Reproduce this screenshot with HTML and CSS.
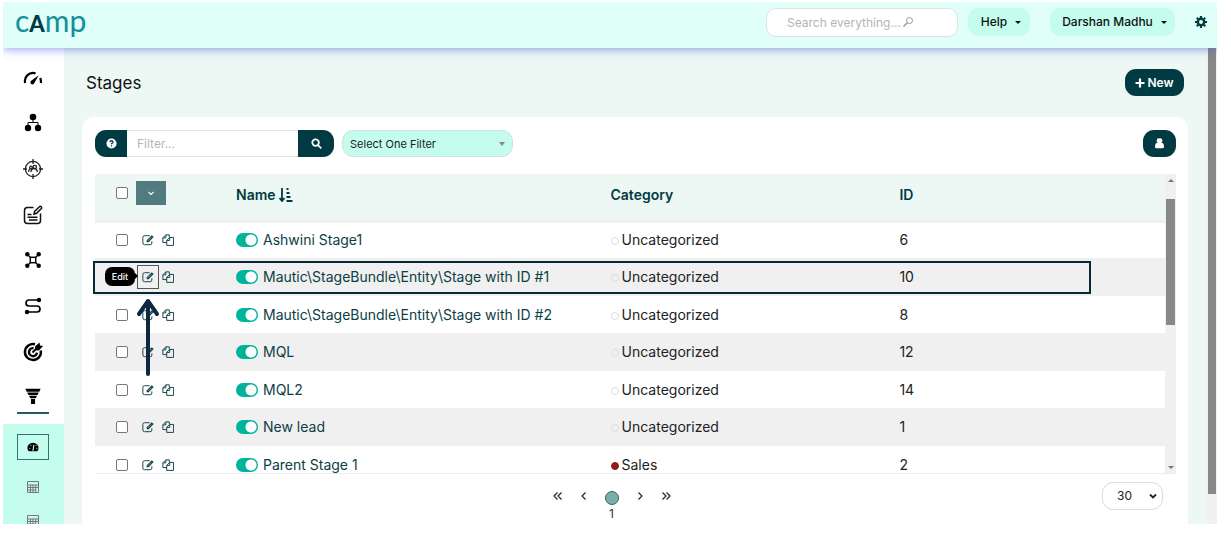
FILE: index.html
```html
<!DOCTYPE html>
<html lang="en">
<head>
<meta charset="utf-8">
<title>Stages</title>
<link rel="stylesheet" href="styles.css">
</head>
<body>
<svg class="defs" aria-hidden="true">
  <symbol id="edit" viewBox="0 0 14 14"><path d="M9 2H3Q1 2 1 4v6.500q0 2 2 2h6.500q2 0 2-2V8.500" fill="none" stroke="currentColor" stroke-width="1.100"/><path d="M5.500 9.500V7.300l5.900-5.900 2.200 2.200-5.900 5.900z" fill="currentColor"/><path d="M6.800 8l4-4" stroke="#fff" stroke-width=".6"/></symbol>
  <symbol id="copy" viewBox="0 0 14 14"><g fill="none" stroke="currentColor" stroke-width="1.100" stroke-linejoin="round"><path d="M5.500 10H1V4.500l3.500-3.500H8.500V4M4.500 1v3.500H1"/><path d="M5.500 7.500l3.500-3.500h4.500V13.300h-8zM9 4v3.500H5.500"/></g></symbol>
  <symbol id="calc" viewBox="0 0 12 12"><path d="M.5.500h11v11H.5zM.5 4h11M3.500 4v7.500M6 4v7.500M8.700 4v7.500M.5 6.500h11M.5 9h8.200" fill="none" stroke="#777" /></symbol>
</svg>
<div class="app">
  <header class="topbar">
    <a class="logo" href="#">c<b>A</b>mp</a>
    <label class="search"><input type="search" aria-label="Search everything" placeholder="Search everything..."><svg viewBox="0 0 12 12"><g fill="none" stroke="#999"><circle cx="7.500" cy="4.500" r="3"/><path d="M5.300 6.700L1.500 10.500" stroke-width="1.500"/></g></svg></label>
    <button class="pill help">Help <i class="caret"></i></button>
    <button class="pill user">Darshan Madhu <i class="caret"></i></button>
    <button class="gear" aria-label="Settings"><svg viewBox="0 0 12 12"><circle cx="6" cy="6" r="3.200" fill="none" stroke="#003b43" stroke-width="2.400"/><path d="M6 0v2M6 10v2M0 6h2M10 6h2M1.800 1.800l1.400 1.400M8.800 8.800l1.400 1.400M1.800 10.200l1.400-1.400M8.800 3.200l1.400-1.400" stroke="#003b43" stroke-width="2.200"/></svg></button>
  </header>
  <div class="body">
    <aside class="sidebar">
      <nav class="nav" aria-label="Main">
        <a href="#" aria-label="Dashboard"><svg viewBox="0 0 20 20"><path d="M2.200 15a8 8 0 0 1 10.300-9.600M17.200 10a8 8 0 0 1 .6 5" fill="none" stroke="#000" stroke-width="2.200"/><path d="M15.800 7.200l-4.600 8a2 2 0 1 1-2.700-2.600z"/></svg></a>
        <a href="#" aria-label="Segments"><svg viewBox="0 0 20 20"><circle cx="10" cy="4" r="3.300"/><circle cx="5" cy="15" r="3.200"/><circle cx="15" cy="15" r="3.200"/><path d="M10 6v3.500M5 13V9.500h10V13" fill="none" stroke="#000"/></svg></a>
        <a href="#" aria-label="Contacts"><svg viewBox="0 0 20 20"><g fill="none" stroke="#222" stroke-width="1.300"><circle cx="10" cy="10" r="7.600"/><path d="M10 0v5M10 15v5M0 10h4M16 10h4M5.500 13q.3-3 2-3.500M8 13q.2-3.500 3-3.500t3.500 3.500"/><circle cx="8" cy="8.500" r="1.300"/><circle cx="11.800" cy="8" r="1.700"/></g></svg></a>
        <a href="#" aria-label="Forms"><svg viewBox="0 0 20 20"><g fill="none" stroke="#111" stroke-width="1.500"><path d="M10.500 2.500h-6q-3 0-3 3v10q0 3 3 3h10q3 0 3-3v-7"/><path d="M11 9.200l.6-2.700 4.800-4.800q1-.8 1.800 0t.2 1.800l-4.800 4.800z"/><path d="M4.500 9.500h4M4.500 12.300h10M6 15h8.500"/></g></svg></a>
        <a href="#" aria-label="Channels"><svg viewBox="0 0 20 20"><path d="M4 4l12 12M16 4L4 16" stroke="#000" stroke-width="1.300"/><rect x="7.300" y="7.300" width="5.400" height="5.400" fill="#fff" stroke="#000" stroke-width="1.400"/><circle cx="4.300" cy="4.300" r="2.200"/><circle cx="15.700" cy="4.300" r="2.200"/><circle cx="4.300" cy="15.700" r="2.200"/><circle cx="15.700" cy="15.700" r="2.200"/></svg></a>
        <a href="#" aria-label="Campaigns"><svg viewBox="0 0 20 20"><path d="M16 4H6a3 3 0 0 0 0 6h8a3 3 0 0 1 0 6H4" fill="none" stroke="#000" stroke-width="1.700"/><circle cx="16" cy="4" r="2.200"/><circle cx="4" cy="16" r="2.200"/></svg></a>
        <a href="#" aria-label="Goals"><svg viewBox="0 0 20 20"><g fill="none" stroke="#000"><path d="M12 2.300A8 8 0 1 0 17.800 8.500" stroke-width="2.500"/><path d="M10.500 6.200a4 4 0 1 0 3.500 4.500" stroke-width="2.400"/><path d="M9.500 10.500l6-6" stroke-width="2"/></g><path d="M12 4.500l4.500-4 .5 3 3 .5-4 4.500-4-.2z"/></svg></a>
        <a href="#" class="current" aria-label="Stages"><svg viewBox="0 0 20 20"><path d="M1.500 2h17l-1.500 3.300H3zM3.500 6h13l-1.500 2.800H5zM5.500 9.600h9l-1.600 2.800H7.100zM7.700 13.200h4.600V19H7.700z"/></svg></a>
      </nav>
      <nav class="subnav" aria-label="Stages">
        <a href="#" class="active" aria-label="Overview"><svg viewBox="0 0 14 12"><path d="M2 11Q.5 9.500.5 7a6.500 6 0 0 1 13 0q0 2.500-1.500 4z"/><path d="M7 10l1-6M3.200 7.500h.1M4.500 4h.1M10.500 4h.1M11.500 7.500h.1" stroke="#c4fced" stroke-width="1.300" stroke-linecap="round"/></svg></a>
        <a href="#" aria-label="Calculator"><svg><use href="#calc"/></svg></a>
        <a href="#" aria-label="Calculator reports"><svg><use href="#calc"/></svg></a>
      </nav>
    </aside>
    <main class="content">
      <div class="title"><h1>Stages</h1><button class="dark new"><svg viewBox="0 0 10 10"><path d="M5 .5v9M.5 5h9" stroke="#fff" stroke-width="2.200"/></svg>New</button></div>
      <section class="card">
        <div class="tools">
          <div class="filter">
            <button class="dark" aria-label="Filter help"><svg viewBox="0 0 12 12"><circle cx="6" cy="6" r="5.500" fill="#fff"/><path d="M4.200 4.500q.2-1.500 1.800-1.500t1.700 1.400q0 .8-.9 1.200t-.8 1.300" fill="none" stroke="#003b43" stroke-width="1.400"/><path d="M5.300 8h1.400v1.300H5.300z" fill="#003b43"/></svg></button>
            <input type="text" aria-label="Filter" placeholder="Filter...">
            <button class="dark" aria-label="Search"><svg viewBox="0 0 12 12"><g fill="none" stroke="#fff" stroke-width="1.900"><circle cx="5" cy="5" r="3.600"/><path d="M7.700 7.700l3.500 3.500"/></g></svg></button>
          </div>
          <div class="choose"><select aria-label="Saved filter"><option>Select One Filter</option></select><i class="caret"></i></div>
          <button class="dark owner" aria-label="My stages"><svg viewBox="0 0 12 12"><path d="M6 .5a2.500 2.500 0 0 1 2 4.500q2.800.8 2.800 3v2q0 1.200-1.300 1.200h-7Q1.200 11.200 1.200 10V8Q1.200 5.800 4 5a2.500 2.500 0 0 1 2-4.500z" fill="#fff"/></svg></button>
        </div>
        <div class="frame">
          <div class="scroll">
            <table>
              <colgroup><col class="c-act"><col class="c-name"><col class="c-cat"><col></colgroup>
              <thead><tr><th><div class="act"><input type="checkbox" aria-label="Select all"><button class="bulk" aria-label="Bulk actions"><svg viewBox="0 0 8 8"><path d="M1.500 3L4 5.500 6.500 3" fill="none" stroke="#fff" stroke-width="1.100"/></svg></button></div></th><th>Name <svg class="sort" viewBox="0 0 14 14"><path d="M3 0v13M.5 10L3 13l2.500-3M7.500 1h2M7.500 5h3M7.500 9h4M7.500 13h6" fill="none" stroke="#003b43" stroke-width="1.800"/></svg></th><th>Category</th><th>ID</th></tr></thead>
              <tbody>
                <tr><td><div class="act"><input type="checkbox" aria-label="Select Ashwini Stage1"><a href="#" aria-label="Edit"><svg><use href="#edit"/></svg></a><a href="#" aria-label="Clone"><svg><use href="#copy"/></svg></a></div></td><td><label class="name"><input type="checkbox" checked><a href="#">Ashwini Stage1</a></label></td><td><i class="dot"></i>Uncategorized</td><td>6</td></tr>
                <tr><td><div class="act"><input type="checkbox" aria-label="Select stage 10"><a href="#" class="focus" aria-label="Edit"><svg><use href="#edit"/></svg></a><a href="#" aria-label="Clone"><svg><use href="#copy"/></svg></a></div></td><td><label class="name"><input type="checkbox" checked><a href="#">Mautic\StageBundle\Entity\Stage with ID #1</a></label></td><td><i class="dot"></i>Uncategorized</td><td>10</td></tr>
                <tr><td><div class="act"><input type="checkbox" aria-label="Select stage 8"><a href="#" aria-label="Edit"><svg><use href="#edit"/></svg></a><a href="#" aria-label="Clone"><svg><use href="#copy"/></svg></a></div></td><td><label class="name"><input type="checkbox" checked><a href="#">Mautic\StageBundle\Entity\Stage with ID #2</a></label></td><td><i class="dot"></i>Uncategorized</td><td>8</td></tr>
                <tr><td><div class="act"><input type="checkbox" aria-label="Select MQL"><a href="#" aria-label="Edit"><svg><use href="#edit"/></svg></a><a href="#" aria-label="Clone"><svg><use href="#copy"/></svg></a></div></td><td><label class="name"><input type="checkbox" checked><a href="#">MQL</a></label></td><td><i class="dot"></i>Uncategorized</td><td>12</td></tr>
                <tr><td><div class="act"><input type="checkbox" aria-label="Select MQL2"><a href="#" aria-label="Edit"><svg><use href="#edit"/></svg></a><a href="#" aria-label="Clone"><svg><use href="#copy"/></svg></a></div></td><td><label class="name"><input type="checkbox" checked><a href="#">MQL2</a></label></td><td><i class="dot"></i>Uncategorized</td><td>14</td></tr>
                <tr><td><div class="act"><input type="checkbox" aria-label="Select New lead"><a href="#" aria-label="Edit"><svg><use href="#edit"/></svg></a><a href="#" aria-label="Clone"><svg><use href="#copy"/></svg></a></div></td><td><label class="name"><input type="checkbox" checked><a href="#">New lead</a></label></td><td><i class="dot"></i>Uncategorized</td><td>1</td></tr>
                <tr><td><div class="act"><input type="checkbox" aria-label="Select Parent Stage 1"><a href="#" aria-label="Edit"><svg><use href="#edit"/></svg></a><a href="#" aria-label="Clone"><svg><use href="#copy"/></svg></a></div></td><td><label class="name"><input type="checkbox" checked><a href="#">Parent Stage 1</a></label></td><td><i class="dot sales"></i>Sales</td><td>2</td></tr>
              </tbody>
            </table>
            <div class="track"><i class="up"></i><div class="thumb"></div><i class="down"></i></div>
          </div>
          <div class="highlight"><span class="tip">Edit</span></div>
          <svg class="arrow" viewBox="0 0 24 80"><path d="M12 77V5M3 17L12 4l9 13" fill="none" stroke="#0f2740" stroke-width="4" stroke-linecap="round" stroke-linejoin="round"/></svg>
        </div>
        <footer class="pager">
          <nav class="pages" aria-label="Pages">
            <a href="#" aria-label="First"><svg viewBox="0 0 10 10"><path d="M4.500 1.500L1 5l3.500 3.500M8.500 1.500L5 5l3.500 3.500"/></svg></a>
            <a href="#" aria-label="Previous"><svg viewBox="0 0 10 10"><path d="M6.500 1.500L3 5l3.500 3.500"/></svg></a>
            <a href="#" class="page"><i></i>1</a>
            <a href="#" aria-label="Next"><svg viewBox="0 0 10 10"><path d="M3.500 1.500L7 5 3.500 8.500"/></svg></a>
            <a href="#" aria-label="Last"><svg viewBox="0 0 10 10"><path d="M1.500 1.500L5 5 1.500 8.500M5.500 1.500L9 5 5.500 8.500"/></svg></a>
          </nav>
          <div class="size"><select aria-label="Rows per page"><option>30</option></select><svg viewBox="0 0 8 8"><path d="M1 2.500l3 3 3-3" fill="none" stroke="#222" stroke-width="1.800"/></svg></div>
        </footer>
      </section>
    </main>
    <div class="pagebar"><div></div></div>
  </div>
</div>
</body>
</html>
```
FILE: styles.css
```css
* { box-sizing: border-box; }
body {
  margin: 0;
  padding: 2px 14px 17px 3px;
  height: 100vh;
  background: #fff;
  color: #222;
  font: 14px/20px Inter, "Liberation Sans", sans-serif;
}
button, input, select { font: inherit; color: inherit; margin: 0; }
button { border: 0; padding: 0; display: flex; align-items: center; justify-content: center; }
a { color: #0c3e45; text-decoration: none; }
svg { display: block; width: 14px; height: 14px; flex: none; }
.defs { position: absolute; width: 0; height: 0; }
.app { height: 100%; display: flex; flex-direction: column; overflow: hidden; }

/* Top bar */
.topbar {
  position: relative;
  z-index: 1;
  flex: none;
  height: 46px;
  padding: 0 10px 6px 12px;
  display: flex;
  align-items: center;
  background: #e0fff8;
  box-shadow: 0 2px 8px rgba(70, 90, 220, .5);
}
.logo { margin-right: auto; font: 30px/32px Lato, sans-serif; color: #128f9b; }
.logo b { font-size: 22px; font-weight: 900; color: #003b43; }
.search { display: grid; align-items: center; width: 192px; margin-right: 10px; }
.search input {
  grid-area: 1 / 1;
  width: 100%;
  height: 29px;
  padding: 0 20px;
  border: 1px solid #d9e5e2;
  border-radius: 10px;
  background: #fff;
  font-size: 12px;
}
.search svg { grid-area: 1 / 1; width: 12px; height: 12px; margin-left: 136px; }
::placeholder { color: #b5b5b5; opacity: 1; }
.pill {
  height: 28px;
  gap: 8px;
  border-radius: 10px;
  background: #c4fced;
  color: #111;
  font-size: 12px;
  font-weight: 500;
}
.help { width: 62px; padding-left: 4px; margin-right: 20px; }
.user { width: 125px; padding-left: 4px; margin-right: 20px; }
.caret { width: 0; height: 0; border: 3px solid transparent; border-top-color: #111; border-bottom: 0; }
.gear { background: none; }
.gear svg { width: 12px; height: 12px; }

.body { flex: 1; min-height: 0; display: flex; }

/* Sidebar */
.sidebar { width: 61px; flex: none; display: flex; flex-direction: column; padding-top: 7px; }
.nav { flex: none; display: grid; grid-auto-rows: 1fr; height: 365px; margin-bottom: 4px; padding-right: 1px; }
.nav a { display: flex; align-items: center; justify-content: center; }
.nav svg { width: 20px; height: 20px; }
.nav .current { width: 32px; margin: 0 auto 6px; padding-top: 6px; border-bottom: 2px solid #245b62; }
.nav .current svg { width: 18px; height: 18px; }
.subnav {
  flex: 1;
  min-height: 0;
  overflow: hidden;
  padding: 10px 1px 0 0;
  background: #c4fced;
  display: flex;
  flex-direction: column;
  align-items: center;
  gap: 8px;
}
.subnav a { flex: none; width: 32px; height: 26px; display: flex; align-items: center; justify-content: center; }
.subnav svg { width: 12px; height: 12px; }
.subnav .active { border: 1px solid #2f7377; margin-bottom: 6px; }

/* Page content */
.content { flex: 1; min-width: 0; background: #edf7f4; padding: 0 19px 0 18px; display: flex; flex-direction: column; }
.title { flex: none; height: 69px; padding: 0 4px; display: flex; align-items: center; justify-content: space-between; }
h1 { margin: 0; font-size: 17px; font-weight: 400; color: #111; }
.dark { background: #003b43; color: #fff; height: 27px; border-radius: 11px; }
.dark svg { width: 11px; height: 11px; }
.new { width: 59px; gap: 2px; font-size: 12px; font-weight: 600; }
.new svg { width: 10px; height: 10px; }
.card { flex: 1; min-height: 0; display: flex; flex-direction: column; padding: 13px 12px 0 13px; border-radius: 12px 12px 0 0; background: #fff; }
.tools { flex: none; display: flex; height: 27px; gap: 8px; margin-bottom: 17px; font-size: 12px; }
.filter { display: flex; width: 239px; }
.filter .dark { flex: none; width: 32px; border-radius: 11px 0 0 11px; }
.filter .dark:last-child { width: 36px; border-radius: 0 11px 11px 0; }
.filter input { flex: 1; min-width: 0; border: 1px solid #e4e4e4; border-width: 1px 0; padding: 0 10px; }
.choose { display: grid; align-items: center; width: 171px; }
.choose select {
  grid-area: 1 / 1;
  appearance: none;
  height: 27px;
  padding: 0 7px;
  border: 1px solid #d0e2dd;
  border-radius: 11px;
  background: #c4fced;
  font-size: 11px;
}
.choose .caret { grid-area: 1 / 1; justify-self: end; margin-right: 8px; border-width: 4px 3px 0; border-top-color: #888; }
.owner { width: 33px; margin-left: auto; }

/* Table */
.frame { position: relative; flex: none; height: 300px; }
.scroll { display: flex; align-items: stretch; height: 100%; overflow: hidden; border-bottom: 1px solid #eee; }
table { flex: 1; min-width: 0; table-layout: fixed; border-collapse: collapse; align-self: flex-start; }
.c-act { width: 141px; }
.c-name { width: 35%; }
.c-cat { width: 27%; }
th, td { padding: 0; text-align: left; }
th { height: 47px; padding-bottom: 3px; background: #edf7f4; border-bottom: 3px solid #f0f0f0; font-weight: 600; color: #003b43; }
td { height: 37px; }
tbody tr:nth-child(even) { background: #f0f0f0; }
tbody tr:nth-child(even) td { height: 38px; }
.act { display: flex; align-items: center; padding-left: 21px; }
.act input { appearance: none; width: 12px; height: 12px; margin-right: 14px; border: 1px solid #777; border-radius: 2px; background: #fff; }
.act a { margin-right: 8px; display: flex; }
.act svg { width: 12px; height: 12px; }
th .act { padding-bottom: 4px; }
th .act input { margin-right: 8px; }
.bulk { width: 30px; height: 24px; background: #527b7f; }
.act .focus { margin: -5px 3px -5px -5px; padding: 5px 4px; border: 1px solid #555; }
.act .bulk svg { width: 8px; height: 8px; }
.sort { display: inline-block; vertical-align: -2px; }
.name { display: flex; align-items: center; gap: 5px; }
.name input { appearance: none; flex: none; width: 22px; height: 14px; border-radius: 7px; background: radial-gradient(circle at 15px 7px, #fff 5px, #00b49c 6px); }
.dot { display: inline-block; width: 8px; height: 8px; margin-right: 3px; border: 1px solid #ddd; border-radius: 50%; }
.sales { background: #8e1b1f; border-color: #8e1b1f; }
.track { flex: none; width: 11px; background: #f0f0f0; display: flex; flex-direction: column; align-items: center; padding: 5px 0 4px; }
.up, .down { border: 3px solid transparent; border-top: 0; border-bottom-color: #777; }
.down { margin-top: auto; border-width: 3px 3px 0; border-top: 3px solid #777; }
.thumb { width: 9px; height: 126px; margin-top: 17px; background: #888; }

/* Callout over the second row */
.highlight { position: absolute; top: 87px; left: -2px; right: 85px; height: 33px; border: 2px solid #082836; pointer-events: none; }
.tip { position: absolute; top: 4px; left: 10px; width: 30px; height: 19px; border-radius: 7px; background: #000; color: #fff; font-size: 9px; font-weight: 500; line-height: 19px; text-align: center; }
.tip::after { content: ""; position: absolute; left: 100%; top: 6px; border: 3px solid transparent; border-left-color: #000; border-right: 0; }
.arrow { position: absolute; left: 41px; top: 123px; width: 24px; height: 80px; }

/* Pager */
.pager { display: grid; grid-template-columns: 1fr auto 1fr; align-items: start; padding: 8px 13px 0; }
.pages { grid-column: 2; display: flex; gap: 16px; padding-top: 9px; margin-right: 48px; }
.pages a { width: 10px; }
.pages svg { width: 10px; height: 10px; fill: none; stroke: #222; stroke-width: 1.2; }
.pages .page { width: 14px; font-size: 12px; line-height: 18px; text-align: center; }
.page i { display: block; width: 14px; height: 14px; border: 1px solid #3d5f60; border-radius: 50%; background: #76b0aa; }
.size { grid-column: 3; justify-self: end; display: grid; align-items: center; width: 61px; }
.size select { grid-area: 1 / 1; appearance: none; height: 28px; padding: 0 14px; border: 1px solid #ddd; border-radius: 11px; background: #fff; font-size: 12px; }
.size svg { grid-area: 1 / 1; justify-self: end; width: 8px; height: 8px; margin-right: 6px; }

/* Page scroll bar */
.pagebar { flex: none; width: 10px; padding: 0 1px 30px; background: #f0f0f0; }
.pagebar div { height: 100%; background: #888; }
```
